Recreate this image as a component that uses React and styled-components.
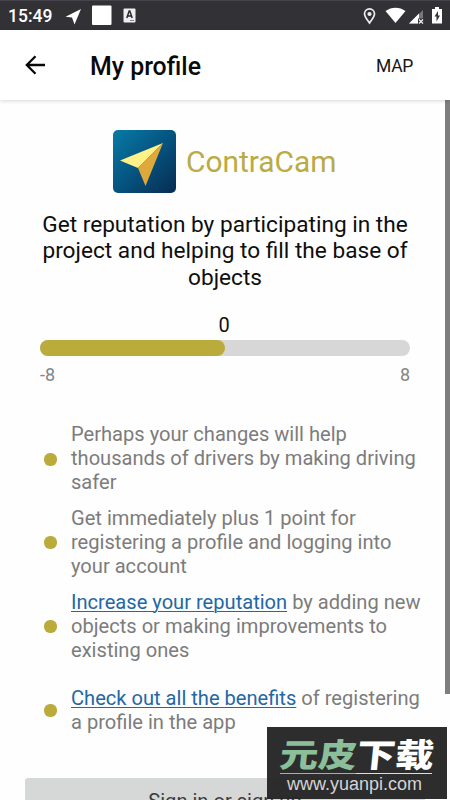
import styled, { createGlobalStyle } from 'styled-components'

const GlobalStyle = createGlobalStyle`
  * {
    box-sizing: border-box;
  }

  body {
    margin: 0;
    background: #fefefe;
    font-family: Roboto, sans-serif;
  }
`

const Screen = styled.div`
  position: relative;
  display: flex;
  flex-direction: column;
  width: 450px;
  height: 800px;
  overflow: hidden;
  background: #fefefe;
`

const StatusBar = styled.div`
  display: flex;
  justify-content: space-between;
  flex: none;
  height: 30px;
  padding: 0 8px 0 8px;
  border-top: 1px solid #45444a;
  background: #323136;
`

const StatusGroup = styled.div`
  display: flex;
  align-items: center;
`

const Clock = styled.span`
  width: 57px;
  color: #fff;
  font-size: 17.5px;
  font-weight: 500;
  line-height: 30px;
`

const StatusIcon = styled.svg`
  flex: none;
  width: ${props => props.$width}px;
  height: 30px;
  margin-left: ${props => props.$gap || 0}px;
`

const Toolbar = styled.header`
  z-index: 1;
  display: flex;
  align-items: center;
  flex: none;
  height: 70px;
  padding: 0 37px 0 25px;
  background: #fff;
  box-shadow: 0 1px 4px rgba(0, 0, 0, 0.16);
`

const BackButton = styled.button`
  display: flex;
  padding: 0;
  border: 0;
  background: none;
`

const Title = styled.h1`
  flex: 1;
  margin: 3px 0 0 44px;
  color: #090909;
  font-size: 24.9px;
  font-weight: 500;
`

const MapButton = styled.button`
  padding: 2px 0 0;
  border: 0;
  background: none;
  color: #161616;
  font-family: inherit;
  font-size: 17.5px;
  letter-spacing: -0.3px;
`

const Content = styled.main`
  display: flex;
  flex: 1;
  min-height: 0;
`

const Page = styled.div`
  display: flex;
  flex-direction: column;
  flex: 1;
  padding: 30px 19px 0 25px;
`

const Scrollbar = styled.div`
  flex: none;
  width: 5px;
  height: 594px;
  background: #7e7e7e;
`

const Brand = styled.div`
  display: flex;
  align-items: center;
  height: 63px;
  margin-left: 88px;
`

const BrandName = styled.span`
  margin-left: 10px;
  color: #baab45;
  font-size: 29.9px;
`

const Lead = styled.p`
  width: 400px;
  margin: 19px 0 0;
  color: #0e0e0e;
  font-size: 22.65px;
  line-height: 26.4px;
  text-align: center;
`

const Rating = styled.div`
  display: flex;
  flex-direction: column;
  width: 370px;
  margin: 23px 0 0 15px;
`

const Score = styled.div`
  width: 368px;
  color: #111;
  font-size: 20px;
  line-height: 22px;
  text-align: center;
`

const Track = styled.div`
  height: 16px;
  margin-top: 4px;
  border-radius: 8px;
  background: #d7d7d7;
`

const Fill = styled.div`
  width: ${props => props.$percent}%;
  height: 100%;
  border-radius: 8px;
  background: #baab3b;
`

const Limits = styled.div`
  display: flex;
  justify-content: space-between;
  margin-top: 8px;
  color: #858585;
  font-size: 18px;
  line-height: 22px;
`

const Benefits = styled.ul`
  display: flex;
  flex-direction: column;
  margin: 31px 0 0;
  padding: 0 0 0 19px;
  list-style: none;
`

const Benefit = styled.li`
  display: flex;
  align-items: center;
  height: 83.8px;
  color: #7c7c7c;
  font-size: 20.1px;
  line-height: 23.8px;
  white-space: nowrap;
`

const Bullet = styled.span`
  flex: none;
  width: 13px;
  height: 13px;
  margin-right: 14px;
  border-radius: 6px;
  background: #baab3b;
`

const Link = styled.a`
  color: #2368a4;
  text-decoration: underline;
  text-decoration-thickness: 1px;
  text-underline-offset: 2px;
`

const SignInButton = styled.button`
  flex: none;
  width: 400px;
  height: 46px;
  margin-top: 26px;
  padding: 0;
  border: 0;
  border-radius: 3px;
  background: #d6d8d7;
  color: #3c3c3c;
  font-family: inherit;
  font-size: 20.1px;
  line-height: 22px;
`

const Watermark = styled.div`
  position: absolute;
  z-index: 2;
  right: 3px;
  bottom: 1px;
  display: flex;
  flex-direction: column;
  align-items: flex-start;
  width: 180px;
  height: 72px;
  padding: 8px 0 0 12px;
  background: rgba(36, 36, 36, 0.96);
`

const WatermarkName = styled.div`
  height: 38px;
  margin-left: 1px;
  color: #fff;
  font-family: 'Noto Sans CJK SC', sans-serif;
  font-size: 38.5px;
  font-weight: 900;
  line-height: 35px;
  white-space: nowrap;
  transform: scaleY(0.85) skewX(-5deg);
`

const Green = styled.span`
  color: #8abf99;
`

const WatermarkRule = styled.div`
  width: 152px;
  height: 1px;
  margin-left: 1px;
  background: linear-gradient(90deg, #8abf99 50%, #ddd 50%);
`

const WatermarkUrl = styled.div`
  margin-left: 8px;
  color: #d4d4d4;
  font-family: 'Liberation Sans', sans-serif;
  font-size: 18px;
  line-height: 20px;
`

function ContraCamLogo() {
  return (
    <svg width="63" height="63" viewBox="0 0 63 63">
      <defs>
        <linearGradient id="tile" x1="0" y1="0" x2="1" y2="1">
          <stop offset="0" stopColor="#087ba6" />
          <stop offset="0.5" stopColor="#055480" />
          <stop offset="1" stopColor="#082c51" />
        </linearGradient>
      </defs>
      <rect width="63" height="63" rx="5" fill="url(#tile)" />
      <path d="M50 13 7 30.5 25 38Z" fill="#fff087" />
      <path d="M50 13 25 38 32.5 56Z" fill="#dfa83b" />
    </svg>
  )
}

const benefits = [
  {
    id: 'drivers',
    text: <>Perhaps your changes will help<br />thousands of drivers by making driving<br />safer</>,
  },
  {
    id: 'point',
    text: <>Get immediately plus 1 point for<br />registering a profile and logging into<br />your account</>,
  },
  {
    id: 'increase',
    text: <><Link>Increase your reputation</Link> by adding new<br />objects or making improvements to<br />existing ones</>,
  },
  {
    id: 'check',
    text: <><Link>Check out all the benefits</Link> of registering<br />a profile in the app</>,
  },
]

export default function App() {
  return (
    <>
      <GlobalStyle />
      <Screen>
        <StatusBar>
          <StatusGroup>
            <Clock>15:49</Clock>
            <StatusIcon $width={17} viewBox="0 0 17 30" fill="#fff">
              <path d="M16 8 .5 15.7 7 16.5 9.5 23.5Z" />
            </StatusIcon>
            <StatusIcon $width={20} $gap={10} viewBox="0 0 20 30" fill="#fff">
              <rect x="0" y="4.5" width="19.5" height="19.5" rx="1" />
            </StatusIcon>
            <StatusIcon $width={13} $gap={11} viewBox="0 0 13 30">
              <rect x="0.5" y="7.5" width="12" height="14" rx="1" fill="#eee" />
              <path d="M3.8 17 6.2 10h.6l2.4 7M4.7 15h3.6" fill="none" stroke="#29292d" strokeWidth="1.5" />
              <path d="M7 19.5h4" stroke="#888" strokeWidth="1" />
            </StatusIcon>
          </StatusGroup>
          <StatusGroup>
            <StatusIcon $width={13} viewBox="0 0 13 30">
              <path d="M6.5 22C4.5 19 1.5 16 1.5 12.8a5 5 0 0 1 10 0C11.5 16 8.5 19 6.5 22Z" fill="none" stroke="#eee" strokeWidth="1.7" />
              <circle cx="6.5" cy="13" r="2.1" fill="#eee" />
            </StatusIcon>
            <StatusIcon $width={21} $gap={9} viewBox="0 0 21 30" fill="#fff">
              <path d="M.5 10C6.5 5.5 14.5 5.500 20.500 10L10.500 22Z" />
            </StatusIcon>
            <StatusIcon $width={15} $gap={3} viewBox="0 0 15 30">
              <path d="M0 22.5 14 9v13.5Z" fill="#77767b" />
              <path d="M0 22.5 10 12.6v9.9Z" fill="#fff" />
              <path d="M9 17.5h6V23H9Z" fill="#323136" />
              <path d="m10 18.5 4 4m0-4-4 4" stroke="#eee" strokeWidth="1.3" />
            </StatusIcon>
            <StatusIcon $width={10} $gap={8} viewBox="0 0 10 30">
              <path d="M3 6h4v2h3v14.5H0V8h3Z" fill="#fff" />
              <path d="M6 10 2.5 15.5h2V20.5L8 14.5H6Z" fill="#323136" />
            </StatusIcon>
          </StatusGroup>
        </StatusBar>
        <Toolbar>
          <BackButton aria-label="Back">
            <svg width="21" height="20" viewBox="0 0 21 20" fill="none" stroke="#080808" strokeWidth="2.3">
              <path d="M20 10H2M10.5 1.2 1.8 10l8.7 8.8" />
            </svg>
          </BackButton>
          <Title>My profile</Title>
          <MapButton>MAP</MapButton>
        </Toolbar>
        <Content>
          <Page>
            <Brand>
              <ContraCamLogo />
              <BrandName>ContraCam</BrandName>
            </Brand>
            <Lead>
              Get reputation by participating in the<br />
              project and helping to fill the base of<br />
              objects
            </Lead>
            <Rating>
              <Score>0</Score>
              <Track>
                <Fill $percent={50} />
              </Track>
              <Limits>
                <span>-8</span>
                <span>8</span>
              </Limits>
            </Rating>
            <Benefits>
              {benefits.map(benefit => (
                <Benefit key={benefit.id}>
                  <Bullet />
                  <div>{benefit.text}</div>
                </Benefit>
              ))}
            </Benefits>
            <SignInButton>Sign in or sign up</SignInButton>
          </Page>
          <Scrollbar />
        </Content>
        <Watermark>
          <WatermarkName><Green>元皮</Green>下载</WatermarkName>
          <WatermarkRule />
          <WatermarkUrl>www.yuanpi.com</WatermarkUrl>
        </Watermark>
      </Screen>
    </>
  )
}
